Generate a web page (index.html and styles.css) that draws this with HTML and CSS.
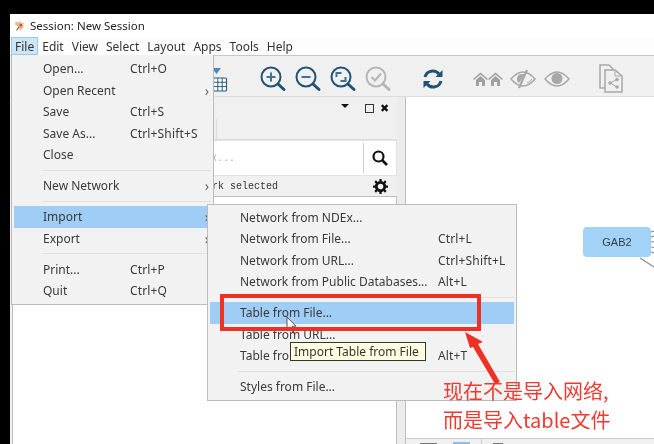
FILE: index.html
```html
<!DOCTYPE html>
<html lang="en">
<head>
<meta charset="utf-8">
<title>Session: New Session</title>
<link rel="stylesheet" href="styles.css">
</head>
<body>
<div class="window">
  <header class="titlebar">
    <svg class="app-icon" viewBox="0 0 14 14" width="12" height="12"><path d="M2 2l4 1 1-2 2 3 3-1-2 4 2 2-3 1-1 3-3-5-4-3z" fill="#e8b98a"/><circle cx="8" cy="6" r="1.6" fill="#c8552a"/><path d="M3 12l3-4" stroke="#8a6a4a" stroke-width="1.4"/></svg>
    <span>Session: New Session</span>
  </header>
  <nav class="menubar">
    <span class="mb mb-active">File</span><span class="mb">Edit</span><span class="mb">View</span><span class="mb">Select</span><span class="mb">Layout</span><span class="mb">Apps</span><span class="mb">Tools</span><span class="mb">Help</span>
  </nav>
  <div class="toolbar">
    <svg class="tb tb-table" viewBox="0 0 18 26" width="18" height="26"><path d="M1 2h9l-4.500 6z" fill="#4d87b5"/><rect x="2.500" y="12" width="13" height="13" rx="1" fill="#fff" stroke="#2a5d80" stroke-width="1.200"/><path d="M2.500 16.300h13M2.500 20.600h13M6.800 12v13M11.200 12v13" stroke="#2a5d80"/></svg>
    <svg class="tb tb-first" viewBox="0 0 28 28" width="28" height="28"><circle cx="12" cy="12" r="9.500" fill="none" stroke="#1f5273" stroke-width="2"/><path d="M19 19l6 5.500" stroke="#1f5273" stroke-width="3" stroke-linecap="round"/><path d="M7.500 12h9M12 7.500v9" stroke="#3a7299" stroke-width="2"/></svg>
    <svg class="tb" viewBox="0 0 28 28" width="28" height="28"><circle cx="12" cy="12" r="9.500" fill="none" stroke="#1f5273" stroke-width="2"/><path d="M19 19l6 5.500" stroke="#1f5273" stroke-width="3" stroke-linecap="round"/><path d="M7.500 12h9" stroke="#3a7299" stroke-width="2"/></svg>
    <svg class="tb" viewBox="0 0 28 28" width="28" height="28"><circle cx="12" cy="12" r="9.500" fill="none" stroke="#1f5273" stroke-width="2"/><path d="M19 19l6 5.500" stroke="#1f5273" stroke-width="3" stroke-linecap="round"/><path d="M7.500 12V8h5M16.500 12v4h-5" fill="none" stroke="#3a7299" stroke-width="2"/></svg>
    <svg class="tb" viewBox="0 0 28 28" width="28" height="28"><circle cx="12" cy="12" r="9.500" fill="none" stroke="#b5b5b5" stroke-width="2"/><path d="M19 19l6 5.500" stroke="#b5b5b5" stroke-width="3" stroke-linecap="round"/><path d="M7.500 12l3.500 3.500 6-7" fill="none" stroke="#b5b5b5" stroke-width="2"/></svg>
    <svg class="tb tb-refresh" viewBox="0 0 22 22" width="22" height="22"><path d="M3 9a8 8 0 0 1 14-3" fill="none" stroke="#1f5273" stroke-width="3"/><path d="M20.500 2v7h-7z" fill="#1f5273"/><path d="M19 13a8 8 0 0 1-14 3" fill="none" stroke="#1f5273" stroke-width="3"/><path d="M1.500 20v-7h7z" fill="#1f5273"/></svg>
    <svg class="tb tb-homes" viewBox="0 0 30 16" width="30" height="16"><path d="M0 8l7.500-6.500L15 8l-1 1-6.500-5.500L1 9zM3 9l4.500-4L12 9v6H9v-4H6v4H3z" fill="#a0a0a0"/><path d="M15 8l7.500-6.500L30 8l-1 1-6.500-5.500L16 9zM18 9l4.500-4L27 9v6h-3v-4h-3v4h-3z" fill="#a0a0a0"/></svg>
    <svg class="tb tb-eye" viewBox="0 0 26 20" width="26" height="20"><path d="M1 10q6-7 12-7t12 7q-6 7-12 7T1 10z" fill="none" stroke="#a8a8a8" stroke-width="1.500"/><path d="M12 5a5 5 0 0 0-3 9l6-9z" fill="#a8a8a8"/><path d="M17 1l-8 18" stroke="#a8a8a8" stroke-width="2.200"/><path d="M17 14q3-1 5-4" fill="none" stroke="#a8a8a8"/></svg>
    <svg class="tb tb-eye2" viewBox="0 0 26 18" width="26" height="18"><path d="M1 9q6-7 12-7t12 7q-6 7-12 7T1 9z" fill="none" stroke="#a8a8a8" stroke-width="1.500"/><circle cx="13" cy="8.500" r="5.500" fill="#a8a8a8"/></svg>
    <svg class="tb tb-doc" viewBox="0 0 26 30" width="26" height="30"><path d="M1 1h9l4 4v19H1z" fill="#f0f0f0" stroke="#a8a8a8" stroke-width="1.500"/><path d="M6 6h10l7 6v16H6z" fill="#f0f0f0" stroke="#a8a8a8" stroke-width="1.500"/><path d="M16 6v6h7" fill="none" stroke="#a8a8a8"/><circle cx="11" cy="19" r="1.800" fill="#a8a8a8"/><circle cx="18" cy="15.500" r="1.800" fill="#a8a8a8"/><circle cx="18" cy="23" r="1.800" fill="#a8a8a8"/><path d="M11 19l7-3.500M11 19l7 4" stroke="#a8a8a8"/></svg>
  </div>
  <main class="workspace">
    <section class="panel">
      <div class="panel-head">
        <span class="caret"></span>
        <span class="winbox"></span>
        <span class="winx">✖</span>
      </div>
      <div class="tabrow"><span class="tab"></span></div>
      <div class="searchbox">
        <span class="hint">Search NDEx...</span>
        <span class="searchbtn">
          <svg viewBox="0 0 16 16" width="16" height="16"><circle cx="6.500" cy="6.500" r="5" fill="none" stroke="#111" stroke-width="2.200"/><path d="M10.500 10.500l4.500 4.500" stroke="#111" stroke-width="2.600"/></svg>
        </span>
      </div>
      <div class="status">
        <span class="status-text">No network selected</span>
        <svg viewBox="0 0 16 16" width="15" height="15"><circle cx="8" cy="8" r="4.500" fill="none" stroke="#111" stroke-width="3"/><path d="M8 0v3M8 13v3M0 8h3M13 8h3M2.300 2.300l2.200 2.200M11.500 11.500l2.200 2.200M2.300 13.700l2.200-2.200M11.500 4.500l2.200-2.200" stroke="#111" stroke-width="2.400"/></svg>
      </div>
      <div class="list"></div>
    </section>
    <div class="splitter"></div>
    <section class="canvas">
      <div class="graph">
        <div class="node">GAB2</div>
        <svg class="edges" viewBox="0 0 20 42" width="20" height="42"><path d="M17 4l3-1M17 9l3-1M17 14l3-.5M17 19l3 .5M17 24l3 1M6 30l14 9" stroke="#8f8f8f" stroke-width="1.200"/></svg>
      </div>
      <div class="canvas-bar">
        <span class="cb cb1"></span><span class="cb cb2"></span><span class="bar-div"></span><span class="cb cb3"></span>
      </div>
    </section>
  </main>
</div>

<div class="menu file-menu">
  <div class="item"><span class="lbl">Open...</span><span class="key">Ctrl+O</span></div>
  <div class="item"><span class="lbl">Open Recent</span><span class="arrow">›</span></div>
  <div class="item"><span class="lbl">Save</span><span class="key">Ctrl+S</span></div>
  <div class="item"><span class="lbl">Save As...</span><span class="key">Ctrl+Shift+S</span></div>
  <div class="item"><span class="lbl">Close</span></div>
  <div class="sep"></div>
  <div class="item"><span class="lbl">New Network</span><span class="arrow">›</span></div>
  <div class="sep"></div>
  <div class="item selected"><span class="lbl">Import</span><span class="arrow">›</span></div>
  <div class="item"><span class="lbl">Export</span><span class="arrow">›</span></div>
  <div class="sep"></div>
  <div class="item"><span class="lbl">Print...</span><span class="key">Ctrl+P</span></div>
  <div class="item"><span class="lbl">Quit</span><span class="key">Ctrl+Q</span></div>
</div>

<div class="menu import-menu">
  <div class="item"><span class="lbl">Network from NDEx...</span></div>
  <div class="item"><span class="lbl">Network from File...</span><span class="key">Ctrl+L</span></div>
  <div class="item"><span class="lbl">Network from URL...</span><span class="key">Ctrl+Shift+L</span></div>
  <div class="item"><span class="lbl">Network from Public Databases...</span><span class="key">Alt+L</span></div>
  <div class="sep"></div>
  <div class="item selected"><span class="lbl">Table from File...</span></div>
  <div class="item"><span class="lbl">Table from URL...</span></div>
  <div class="item"><span class="lbl">Table from Public Databases...</span><span class="key">Alt+T</span></div>
  <div class="sep"></div>
  <div class="item"><span class="lbl">Styles from File...</span></div>
</div>

<div class="tooltip">Import Table from File</div>

<svg class="cursor" viewBox="0 0 12 18" width="12" height="18"><path d="M1 1v13l3.200-3 2.300 5 2-1-2.300-4.800H10z" fill="#fff" stroke="#555" stroke-width="1"/></svg>

<div class="redbox"></div>
<svg class="redarrow" viewBox="0 0 50 60" width="50" height="60"><path d="M6 1l18 10-5 2 22 38-5 2-22-37-3 1z" fill="#ee3124"/></svg>
<div class="note">现在不是导入网络,<br>而是导入table文件</div>
</body>
</html>
```
FILE: styles.css
```css
* { box-sizing: border-box; }
html, body { margin: 0; padding: 0; }
body {
  position: relative;
  width: 654px;
  height: 444px;
  overflow: hidden;
  background: #000;
  font-family: "Noto Sans", "Liberation Sans", sans-serif;
  font-size: 12px;
  color: #333;
  filter: blur(0.3px);
}
.window {
  margin: 14px 0 0 10px;
  height: 430px;
  display: flex;
  flex-direction: column;
  background: #f0f0f0;
}
.titlebar {
  height: 23px;
  flex: none;
  background: #fff;
  display: flex;
  align-items: center;
  gap: 4px;
  padding-left: 4px;
  font-size: 11.5px;
  color: #222;
}
.app-icon { flex: none; }
.menubar {
  height: 19px;
  flex: none;
  background: #fdfdfd;
  border-bottom: 1px solid #c8c8c8;
  display: flex;
  padding-left: 1px;
}
.mb {
  padding: 0 3px;
  line-height: 17px;
  height: 18px;
  color: #333;
  border: 1px solid transparent;
}
.mb-active { background: #cde6f7; border-color: #9cc9e8; }
.toolbar {
  height: 41px;
  flex: none;
  background: #f0f0f0;
  border-bottom: 1px solid #dcdcdc;
  display: flex;
  align-items: center;
  padding: 5px 0 0 194px;
}
.tb { flex: none; margin-left: 7px; }
.tb-first { margin-left: 30px; }
.tb-refresh { margin-left: 30px; }
.tb-homes { margin-left: 29px; }
.tb-eye { margin-left: 7px; }
.tb-eye2 { margin-left: 8px; }
.tb-doc { margin-left: 29px; }
.workspace { flex: 1; display: flex; min-height: 0; }
.panel {
  width: 385px;
  margin-left: 2px;
  flex: none;
  display: flex;
  flex-direction: column;
  background: #f0f0f0;
}
.panel-head {
  height: 22px;
  flex: none;
  display: flex;
  align-items: center;
  justify-content: flex-end;
  padding-right: 8px;
}
.caret {
  width: 0;
  height: 0;
  border-left: 4px solid transparent;
  border-right: 4px solid transparent;
  border-top: 4px solid #111;
  margin-right: 16px;
  margin-bottom: 4px;
}
.winbox {
  width: 9px;
  height: 9px;
  border: 1px solid #333;
  margin-right: 6px;
}
.winx { font-size: 11px; line-height: 10px; color: #111; }
.tabrow {
  height: 21px;
  flex: none;
  border-bottom: 1px solid #dcdcdc;
}
.tab {
  display: block;
  width: 205px;
  height: 20px;
  background: #ececec;
  border-right: 1px solid #dcdcdc;
}
.searchbox {
  height: 36px;
  flex: none;
  background: #fff;
  border: 1px solid #e4e4e4;
  display: flex;
  align-items: center;
  justify-content: space-between;
  padding-left: 138px;
}
.hint {
  font-family: "Liberation Mono", monospace;
  font-size: 10px;
  color: #aaa;
}
.searchbtn {
  width: 33px;
  height: 30px;
  display: flex;
  align-items: center;
  justify-content: center;
  border-left: 1px solid #ccc;
}
.status {
  height: 20px;
  flex: none;
  display: flex;
  align-items: center;
  justify-content: space-between;
  padding: 0 9px 0 152px;
}
.status-text {
  font-family: "Liberation Mono", monospace;
  font-size: 10px;
  color: #333;
}
.list {
  flex: 1;
  background: #fff;
  border: 1px solid #bdbdbd;
  border-bottom: 0;
}
.splitter {
  width: 9px;
  flex: none;
  background: #ececec;
  border-right: 1px solid #bdbdbd;
}
.canvas {
  flex: 1;
  display: flex;
  flex-direction: column;
  background: #fff;
  position: relative;
}
.graph {
  flex: 1;
  display: flex;
  align-items: flex-start;
  justify-content: flex-end;
  padding-top: 130px;
}
.node {
  width: 68px;
  height: 30px;
  background: #a2d2f5;
  border-radius: 4px;
  display: flex;
  align-items: center;
  justify-content: center;
  font-family: "Liberation Sans", sans-serif;
  font-size: 11px;
  color: #2f3f4a;
  margin-right: 3px;
}
.edges { position: absolute; top: 131px; right: 0; }
.canvas-bar {
  height: 6px;
  flex: none;
  background: #f0f0f0;
  border-top: 1px solid #ccc;
  display: flex;
  align-items: flex-end;
  padding-left: 14px;
}
.cb { display: block; height: 1px; background: #777; }
.cb1 { width: 17px; }
.cb2 { width: 17px; margin-left: 16px; background: #8fbfe8; height: 2px; }
.bar-div { width: 1px; height: 5px; background: #ccc; margin-left: 11px; }
.cb3 { width: 10px; margin-left: 11px; }

.menu {
  position: absolute;
  background: #f2f2f2;
  border: 1px solid #bcbcbc;
  padding: 2px;
  color: #3a3a3a;
}
.file-menu { left: 11px; top: 55px; width: 203px; height: 250px; border-top: 0; padding-top: 3px; }
.import-menu { left: 207px; top: 204px; width: 310px; height: 197px; padding-top: 1.5px; }
.item {
  height: 21.5px;
  display: flex;
  align-items: center;
  position: relative;
  white-space: nowrap;
}
.item.selected { background: #a0cdf5; }
.file-menu .lbl { position: absolute; left: 29px; }
.file-menu .key { position: absolute; left: 116px; letter-spacing: .15px; }
.import-menu .lbl { position: absolute; left: 30px; }
.import-menu .key { position: absolute; left: 228px; letter-spacing: .15px; }
.arrow { position: absolute; right: 2px; font-size: 14px; color: #666; }
.sep { height: 9.5px; display: flex; align-items: center; }
.sep::after { content: ""; display: block; margin-left: 28px; flex: 1; height: 1px; background: #e0e0e0; }

.tooltip {
  position: absolute;
  left: 290px;
  top: 342px;
  width: 136px;
  height: 19px;
  background: #ffffe1;
  border: 1px solid #333;
  font-size: 12px;
  line-height: 17px;
  padding-left: 3px;
  color: #333;
  white-space: nowrap;
}
.cursor { position: absolute; left: 286px; top: 316px; }
.redbox {
  position: absolute;
  left: 220px;
  top: 294px;
  width: 261px;
  height: 37px;
  border: 4px solid #ee3124;
}
.redarrow { position: absolute; left: 459px; top: 331px; }
.note {
  position: absolute;
  left: 443px;
  top: 376px;
  font-family: "Noto Sans CJK SC", sans-serif;
  font-size: 20px;
  line-height: 29px;
  color: #ee3a30;
  white-space: nowrap;
}
```
